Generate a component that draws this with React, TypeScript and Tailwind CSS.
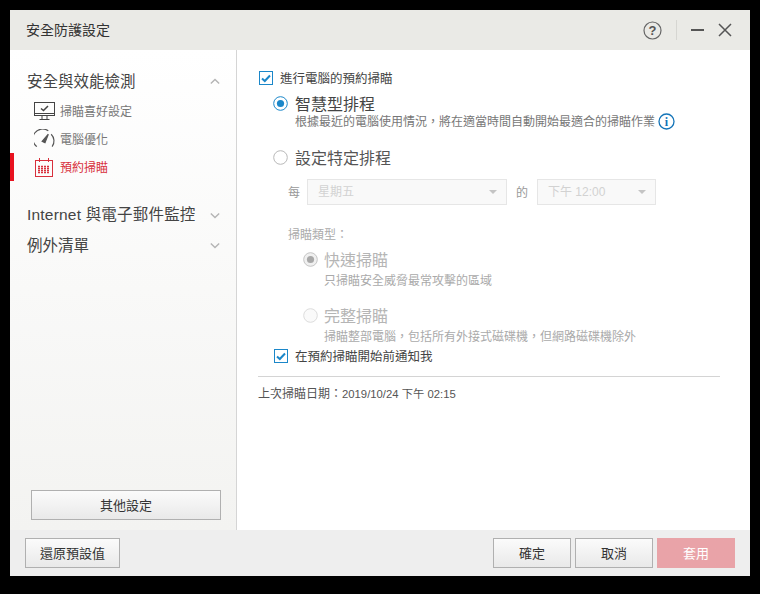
import React from "react";

function Check({ className = "" }: { className?: string }) {
  return (
    <span className={`flex h-[14px] w-[14px] shrink-0 items-center justify-center border border-[#1b87c9] bg-white ${className}`}>
      <svg width="10" height="9" viewBox="0 0 10 9" fill="none">
        <path d="M1 4.5 L3.8 7 L9 1.5" stroke="#1b87c9" strokeWidth="2" />
      </svg>
    </span>
  );
}

function Radio({ on, color = "#1b87c9", ring = "#1b87c9", bg = "#fff" }: { on?: boolean; color?: string; ring?: string; bg?: string }) {
  return (
    <svg width="15" height="15" viewBox="0 0 15 15" className="shrink-0">
      <circle cx="7.5" cy="7.5" r="6.8" fill={bg} stroke={ring} strokeWidth="1" />
      {on && <circle cx="7.5" cy="7.5" r="3.6" fill={color} />}
    </svg>
  );
}

function Select({ label, w }: { label: string; w: string }) {
  return (
    <div className={`flex h-[26px] items-center justify-between border border-[#e6e6e6] bg-[#f9f9f9] pl-[10px] pr-[9px] font-['Liberation_Sans','Noto_Sans_CJK_TC',sans-serif] text-[12px] text-[#d2d2d2] ${w}`}>
      <span>{label}</span>
      <span className="h-0 w-0 border-x-[4px] border-t-[4px] border-x-transparent border-t-[#c4c4c4]" />
    </div>
  );
}

function Btn({ children, w, className = "" }: { children: React.ReactNode; w: string; className?: string }) {
  return (
    <button className={`flex h-[30px] items-center justify-center border border-[#b0b0b0] bg-gradient-to-b from-[#fbfbfb] to-[#e9e9e9] text-[13px] text-[#333] ${w} ${className}`}>
      {children}
    </button>
  );
}

function Chevron({ up }: { up?: boolean }) {
  return (
    <svg width="10" height="7" viewBox="0 0 12 8" fill="none">
      <path d={up ? "M1 6.5 L6 1.5 L11 6.5" : "M1 1.5 L6 6.5 L11 1.5"} stroke="#b5b5b5" strokeWidth="1.7" />
    </svg>
  );
}

function SubItem({ icon, label, active }: { icon: React.ReactNode; label: string; active?: boolean }) {
  return (
    <div className={`flex h-[28px] items-center border-l-[4px] ${active ? "border-[#e8121f] text-[#d8303c]" : "border-transparent text-[#777]"} text-[12px]`}>
      <span className="flex w-[46px] justify-center pl-[14px]">{icon}</span>
      <span>{label}</span>
    </div>
  );
}

const Monitor = (
  <svg width="21" height="19" viewBox="0 0 21 19" fill="none" stroke="#444" strokeWidth="1">
    <rect x="0.5" y="0.5" width="20" height="13" />
    <path d="M1 11.5 H20" />
    <path d="M7 6.5 L9.5 8.5 L14 4" strokeWidth="1.5" />
    <path d="M8 14 V17 M13 14 V17 M5.5 17.5 H15.5" />
  </svg>
);

const Gauge = (
  <svg width="21" height="20" viewBox="0 0 22 20" fill="none" stroke="#555" strokeWidth="1.2">
    <path d="M3 18 A10 10 0 0 1 15 1.5" />
    <path d="M18 5 A10 10 0 0 1 19 18" />
    <path d="M8.5 12.5 L15 5 L11.5 14 Z" fill="#555" />
  </svg>
);

const Calendar = (
  <svg width="18" height="19" viewBox="0 0 18 19" fill="none" stroke="#d8303c" strokeWidth="1">
    <rect x="0.5" y="2.5" width="17" height="16" />
    <path d="M4.5 0 V4 M13.5 0 V4" />
    <path d="M3 8.5 H15 M3 10.5 H15 M3 12.5 H15 M3 14.5 H15" strokeWidth="1.4" strokeDasharray="2 1" />
  </svg>
);

export default function App() {
  return (
    <div className="h-[594px] w-[760px] bg-black pl-[10px] pt-[10px] font-['Noto_Sans_CJK_TC','Noto_Sans',sans-serif]">
      <div className="flex h-[566px] w-[740px] flex-col bg-white">
        <div className="flex h-[40px] shrink-0 items-center justify-between bg-[#eaeae6] pl-[16px] pr-[18px]">
          <span className="mb-[2px] text-[14px] text-[#333]">安全防護設定</span>
          <div className="flex items-center">
            <svg width="19" height="19" viewBox="0 0 19 19" fill="none">
              <circle cx="9.5" cy="9.5" r="8.5" stroke="#666" strokeWidth="1.2" />
              <text x="9.5" y="14" textAnchor="middle" fontSize="13" fontWeight="700" fill="#555" fontFamily="Liberation Sans">?</text>
            </svg>
            <span className="ml-[14px] h-[20px] w-px bg-[#d6d6d2]" />
            <span className="ml-[14px] h-[2px] w-[13px] bg-[#555]" />
            <svg className="ml-[14px]" width="14" height="14" viewBox="0 0 14 14" fill="none">
              <path d="M1 1 L13 13 M13 1 L1 13" stroke="#555" strokeWidth="1.5" />
            </svg>
          </div>
        </div>

        <div className="flex min-h-0 flex-1">
          <aside className="flex w-[227px] shrink-0 flex-col border-r border-[#d5d5d5] bg-gradient-to-b from-white to-[#f3f3f1] pt-[18px]">
            <div className="flex h-[26px] items-center justify-between pl-[17px] pr-[16px] text-[15.5px] text-[#444]">
              <span>安全與效能檢測</span>
              <Chevron up />
            </div>
            <div className="mt-[3px] flex flex-col">
              <SubItem icon={Monitor} label="掃瞄喜好設定" />
              <SubItem icon={Gauge} label="電腦優化" />
              <SubItem icon={Calendar} label="預約掃瞄" active />
            </div>
            <div className="mt-[20px] flex h-[26px] items-center justify-between pl-[17px] pr-[16px] pt-[2px] text-[15.5px] text-[#444]">
              <span className="font-['Liberation_Sans','Noto_Sans_CJK_TC',sans-serif] tracking-[0.2px]">Internet 與電子郵件監控</span>
              <Chevron />
            </div>
            <div className="mt-[5px] flex h-[26px] items-center justify-between pl-[17px] pr-[16px] text-[15.5px] text-[#444]">
              <span>例外清單</span>
              <Chevron />
            </div>
            <div className="mt-auto pb-[10px] pl-[21px]">
              <Btn w="w-[190px]">其他設定</Btn>
            </div>
          </aside>

          <main className="flex-1 pl-[21px] pr-[30px] pt-[20px]">
            <div className="flex h-[16px] items-center gap-[7px] pl-[1px] text-[12.5px] leading-[16px] text-[#444]">
              <Check />
              <span>進行電腦的預約掃瞄</span>
            </div>
            <div className="mt-[7px] pl-[15px]">
              <div className="flex h-[20px] items-center gap-[7px] text-[16px] leading-[20px] text-[#444]">
                <Radio on />
                <span>智慧型排程</span>
              </div>
              <div className="flex h-[16px] items-center pl-[22px] text-[12px] leading-[16px] text-[#777]">
                <span>根據最近的電腦使用情況，將在適當時間自動開始最適合的掃瞄作業</span>
                <svg className="ml-[3px]" width="17" height="17" viewBox="0 0 17 17" fill="none">
                  <circle cx="8.5" cy="8.5" r="7.5" stroke="#1474b8" strokeWidth="1.3" />
                  <text x="8.5" y="13" textAnchor="middle" fontSize="12" fontWeight="700" fill="#1474b8" fontFamily="Liberation Serif">i</text>
                </svg>
              </div>
              <div className="mt-[17px] flex h-[22px] items-center gap-[7px] text-[16px] leading-[22px] text-[#555]">
                <Radio ring="#b8b8b8" />
                <span>設定特定排程</span>
              </div>
            </div>

            <div className="mt-[11px] flex items-center pl-[30px] text-[12px] text-[#999]">
              <span className="w-[19px]">每</span>
              <Select label="星期五" w="w-[200px]" />
              <span className="w-[30px] pl-[9px]">的</span>
              <Select label="下午 12:00" w="w-[119px]" />
            </div>

            <div className="mt-[20px] pl-[30px] text-[12px] text-[#aaa]">掃瞄類型：</div>

            <div className="mt-[5px] pl-[45px]">
              <div className="flex h-[22px] items-center gap-[6px] text-[16px] leading-[22px] text-[#b5b5b5]">
                <Radio on ring="#c4c4c4" color="#a8a8a8" bg="#f0f0f0" />
                <span>快速掃瞄</span>
              </div>
              <div className="h-[20px] pl-[21px] text-[12px] leading-[20px] text-[#aaa]">只掃瞄安全威脅最常攻擊的區域</div>
              <div className="mt-[14px] flex h-[22px] items-center gap-[6px] text-[16px] leading-[22px] text-[#b5b5b5]">
                <Radio ring="#dcdcdc" bg="#fafafa" />
                <span>完整掃瞄</span>
              </div>
              <div className="h-[20px] pl-[21px] text-[12px] leading-[20px] text-[#aaa]">掃瞄整部電腦，包括所有外接式磁碟機，但網路磁碟機除外</div>
            </div>

            <div className="mt-[2px] flex h-[16px] items-center gap-[7px] pl-[16px] text-[12.5px] leading-[16px] text-[#444]">
              <Check />
              <span>在預約掃瞄開始前通知我</span>
            </div>

            <div className="mt-[12px] border-t border-[#d4d4d4] pt-[8px] font-['Liberation_Sans','Noto_Sans_CJK_TC',sans-serif] text-[12px] leading-[18px] text-[#555]">
              上次掃瞄日期：<span className="text-[11.3px]">2019/10/24 下午 02:15</span>
            </div>
          </main>
        </div>

        <div className="flex h-[46px] shrink-0 items-center bg-[#eeeeee] pl-[15px] pr-[15px]">
          <Btn w="w-[95px]">還原預設值</Btn>
          <div className="ml-auto flex gap-[4px]">
            <Btn w="w-[78px]">確定</Btn>
            <Btn w="w-[78px]">取消</Btn>
            <Btn w="w-[78px]" className="!border-[#e8a4a8] !from-[#e9a3a8] !to-[#e9a3a8] !text-white">套用</Btn>
          </div>
        </div>
      </div>
    </div>
  );
}
